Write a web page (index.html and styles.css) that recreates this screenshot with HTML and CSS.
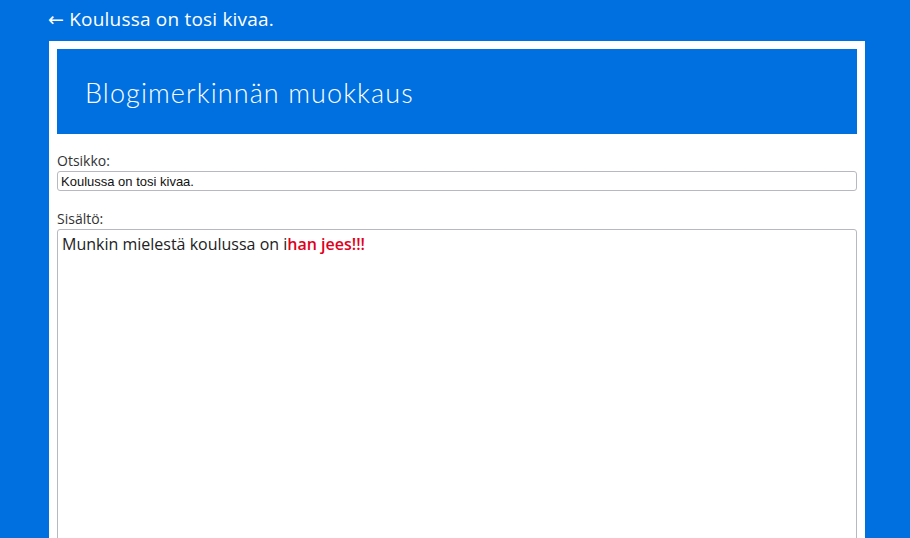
FILE: index.html
```html
<!DOCTYPE html>
<html>
  <head>
    <meta charset="utf-8">
    <title>Blogimerkinnän muokkaus</title>
    <link rel="stylesheet" href="styles.css">
  </head>
  <body>
    <a class="back-link" href="#"><span class="arrow">&larr;</span> Koulussa on tosi kivaa.</a>
    <div class="page-box">
      <div class="page-header">
        <h1>Blogimerkinnän muokkaus</h1>
      </div>
      <form id="editForm">
        <label for="title">Otsikko:</label>
        <input type="text" id="title" value="Koulussa on tosi kivaa." />
        <label for="content">Sisältö:</label>
        <div id="content" class="content-editor" contenteditable="true">Munkin mielestä koulussa on i<b class="red">han jees!!!</b></div>
      </form>
    </div>
  </body>
</html>
```

FILE: styles.css
```css
body {
  margin: 0;
  background-color: rgb(0, 112, 224);
  font-family: "Open Sans", Arial, sans-serif;
  color: #333;
  overflow: hidden;
}

.back-link {
  display: block;
  padding: 6px 0 0 48px;
  height: 41px;
  box-sizing: border-box;
  color: #ffffff;
  font-size: 19px;
  letter-spacing: 0.2px;
  text-decoration: none;
}

.back-link .arrow {
  font-family: "DejaVu Sans", sans-serif;
  font-size: 19px;
}

.page-box {
  background-color: #ffffff;
  margin-left: 49px;
  width: 816px;
  padding: 8px;
  box-sizing: border-box;
  height: 600px;
}

.page-header {
  background-color: rgb(0, 112, 224);
  height: 85px;
  padding-left: 28px;
  display: flex;
  align-items: center;
}

.page-header h1 {
  margin: 0;
  padding-top: 2px;
  color: #ffffff;
  font-family: Lato, "Open Sans", sans-serif;
  font-weight: 300;
  font-size: 27px;
  letter-spacing: 1.1px;
}

#editForm label {
  display: block;
  font-size: 14px;
  margin-top: 17px;
  line-height: 19px;
}

input[type="text"] {
  display: block;
  width: 100%;
  height: 20px;
  margin-top: 1px;
  box-sizing: border-box;
  border: 1px solid #b8b8c0;
  border-radius: 3px;
  padding: 1px 3px;
  font-family: Arial, "Liberation Sans", sans-serif;
  font-size: 13px;
  color: #111;
}

#editForm input + label {
  margin-top: 18px;
}

.content-editor {
  margin-top: 1px;
  border: 1px solid #b8b8c0;
  border-radius: 3px;
  padding: 3px 4px;
  height: 400px;
  font-size: 16px;
  line-height: 22px;
  color: #222;
}

.red {
  color: #e0001a;
  font-weight: 600;
}
```
